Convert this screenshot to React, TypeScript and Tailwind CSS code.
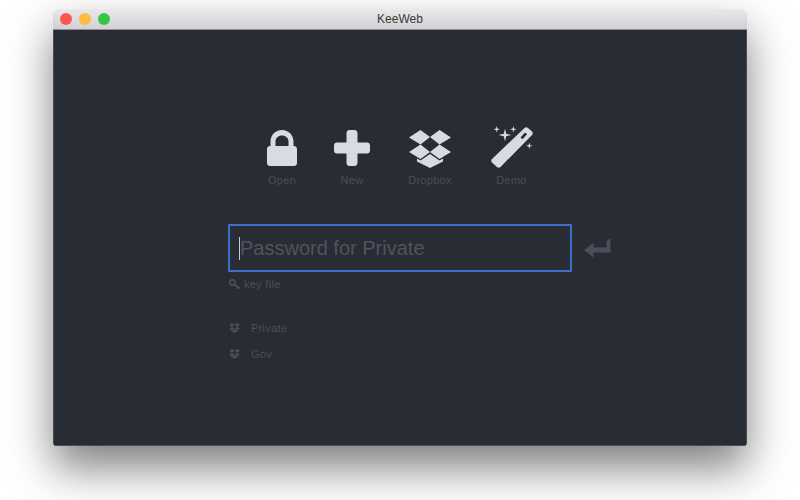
import React from 'react';

const LockIcon = () => (
  <svg width="30" height="36" viewBox="0 0 30 36" className="text-[#d9dbe2]">
    <path
      fill="currentColor"
      fillRule="evenodd"
      d="M3.500 16V11.500C3.500 5 8.500 0 15 0s11.500 5 11.500 11.500V16H27c1.700 0 3 1.300 3 3v14c0 1.700-1.300 3-3 3H3c-1.700 0-3-1.300-3-3V19c0-1.700 1.300-3 3-3h.5zm5 0h13v-4.500c0-3.500-2.900-6-6.500-6s-6.500 2.500-6.500 6V16z"
    />
  </svg>
);

const PlusIcon = () => (
  <svg width="36" height="36" viewBox="0 0 36 36" className="text-[#d9dbe2]">
    <path
      fill="currentColor"
      d="M15.500 0h5c1.500 0 3 1.300 3 3v9.500H33c1.700 0 3 1.300 3 3v5c0 1.700-1.300 3-3 3h-9.500V33c0 1.700-1.500 3-3 3h-5c-1.500 0-3-1.300-3-3v-9.500H3c-1.700 0-3-1.300-3-3v-5c0-1.700 1.300-3 3-3h9.500V3c0-1.700 1.500-3 3-3z"
    />
  </svg>
);

const DropboxIcon = ({ size = 42, className = 'text-[#d9dbe2]' }: { size?: number; className?: string }) => (
  <svg width={size} height={(size * 38) / 42} viewBox="0 0 42 38" className={className}>
    <path
      fill="currentColor"
      d="M11.500 0 21 7l-9.500 7.500L0 7.500zM30.500 0 42 7.500l-11.500 7L21 7zM11.500 14.500 21 22l-9.500 7L0 22zM30.500 14.500 42 22l-11.500 7L21 22zM21 24l9.500 6.500 3.500-2v3L21 38 8 31.500v-3l3.500 2z"
    />
  </svg>
);

const WandIcon = () => (
  <svg width="42" height="42" viewBox="0 0 42 42" className="text-[#d9dbe2]">
    <path
      fill="currentColor"
      fillRule="evenodd"
      d="M33.500 2c1-1 2.500-1 3.500 0l4 3.500c1 1 1 2.500 0 3.500L9.500 41c-1 1-2.500 1-3.500 0l-5-4.500c-1-1-1-2.500 0-3.500zM34 6.500 29.500 11.500l2 1.800 4.600-5z"
    />
    <path
      fill="currentColor"
      d="M14 2.500l1.200 5.300 5.300 1.200-5.300 1.200L14 15.500l-1.200-5.300L7.500 9l5.300-1.200zM5.700 0l.7 2.600L9 3.300l-2.600.7-.7 2.600L5 4 2.400 3.300 5 2.600zM22.300 0l.7 2.600 2.600.7-2.600.7-.7 2.600-.7-2.600-2.600-.7 2.600-.7zM38.300 16.400l.7 2.600 2.600.7-2.600.7-.7 2.600-.7-2.600-2.600-.7 2.600-.7z"
    />
  </svg>
);

const EnterIcon = () => (
  <svg width="27" height="21" viewBox="0 0 27 21" className="text-[#4b4f5a]">
    <path fill="currentColor" d="M26.500 0v14.500h-17v5L0 12l9.500-7v4.500h13v-6z" />
  </svg>
);

const KeyIcon = () => (
  <svg width="12" height="11" viewBox="0 0 12 11" className="text-[#4b4f5a]">
    <circle cx="3.500" cy="3.500" r="2.600" fill="none" stroke="currentColor" strokeWidth="1.600" />
    <path fill="none" stroke="currentColor" strokeWidth="1.800" d="M5.500 5.500 10.800 9.500M8.800 8l-1 1.500" />
  </svg>
);

const actions = [
  { label: 'Open', icon: <LockIcon />, iconBox: 'pt-1 w-[30px] justify-center' },
  { label: 'New', icon: <PlusIcon />, iconBox: 'pt-1 w-[36px] justify-center' },
  { label: 'Dropbox', icon: <DropboxIcon />, iconBox: 'pt-1 w-[46px] justify-center' },
  { label: 'Demo', icon: <WandIcon />, iconBox: 'w-[43px] justify-end' },
];

const files = ['Private', 'Gov'];

export default function App() {
  return (
    <div className="h-[500px] w-[800px] overflow-hidden bg-white px-[53px] pt-[9px] font-['Liberation_Sans',sans-serif]">
      <div className="h-[437px] rounded-t-[5px] rounded-b-[4px] shadow-[0_22px_44px_rgba(0,0,0,0.5)]">
        <div className="flex h-full flex-col overflow-hidden rounded-t-[5px] rounded-b-[4px]">
          <div className="relative flex h-[21px] shrink-0 items-center border-b border-[#8f8f93] bg-gradient-to-b from-[#ebe8eb] to-[#d3d0d3] pl-[7px]">
            <div className="flex gap-[7px]">
              <span className="h-3 w-3 rounded-full bg-[#fc5753]" />
              <span className="h-3 w-3 rounded-full bg-[#fdbc40]" />
              <span className="h-3 w-3 rounded-full bg-[#33c748]" />
            </div>
            <span className="absolute inset-x-0 text-center text-[12px] leading-5 text-[#3a3a3a]">KeeWeb</span>
          </div>

          <div className="flex flex-1 flex-col items-center border-x border-b border-[#4a4d57] bg-[#282c34] pt-[96px]">
            <div className="flex gap-[37px]">
              {actions.map((a) => (
                <div key={a.label} className="flex flex-col items-center">
                  <div className={`flex h-[48px] items-start ${a.iconBox}`}>{a.icon}</div>
                  <span className="mt-[-1px] text-[11px] leading-[14px] tracking-[0.3px] text-[#4b4f5a]">{a.label}</span>
                </div>
              ))}
            </div>

            <div className="relative mt-[37px] w-[344px]">
              <div className="flex h-12 items-center rounded-[1px] border-2 border-[#3b6fcf] pl-[9px]">
                <span className="h-[23px] w-px bg-[#c8cad0]" />
                <span className="text-[20px] text-[#50545e]">Password for Private</span>
              </div>
              <div className="absolute top-[14px] left-[356px]">
                <EnterIcon />
              </div>

              <div className="mt-[5px] flex items-center gap-[3px] pl-px text-[11px] leading-[14px] tracking-[0.3px] text-[#4b4f5a]">
                <KeyIcon />
                <span>key file</span>
              </div>

              <div className="mt-[30px] flex flex-col gap-3 pl-px">
                {files.map((f) => (
                  <div key={f} className="flex h-[14px] items-center gap-[11px] text-[11px] tracking-[0.3px] text-[#4b4f5a]">
                    <DropboxIcon size={11} className="text-[#4b4f5a]" />
                    <span>{f}</span>
                  </div>
                ))}
              </div>
            </div>
          </div>
        </div>
      </div>
    </div>
  );
}
